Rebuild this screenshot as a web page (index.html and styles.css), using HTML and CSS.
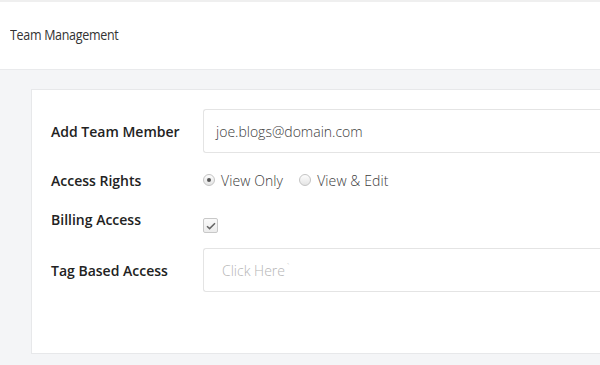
FILE: index.html
```html
<!DOCTYPE html>
<html>
<head>
<meta charset="utf-8">
<link rel="stylesheet" href="styles.css">
</head>
<body>
<header class="topbar">
  <h1 class="title">Team Management</h1>
</header>
<main class="content">
  <section class="card">
    <div class="row row-input">
      <label class="label">Add Team Member</label>
      <div class="field text-field">joe.blogs@domain.com</div>
    </div>
    <div class="row row-radio">
      <span class="label">Access Rights</span>
      <div class="options">
        <span class="option"><span class="radio checked"></span>View Only</span>
        <span class="option"><span class="radio"></span>View &amp; Edit</span>
      </div>
    </div>
    <div class="row row-check">
      <span class="label">Billing Access</span>
      <span class="checkbox">
        <svg width="10" height="8" viewBox="0 0 10 8"><path d="M1 4.2 L3.6 6.6 L9 1.2" fill="none" stroke="#666" stroke-width="1.5"/></svg>
      </span>
    </div>
    <div class="row row-input">
      <span class="label">Tag Based Access</span>
      <div class="field tag-field">Click Here<span class="tick">`</span></div>
    </div>
  </section>
</main>
</body>
</html>
```
FILE: styles.css
```css
* { box-sizing: border-box; }
html, body { margin: 0; padding: 0; }
body {
  background: #f4f5f7;
  font-family: "Open Sans", "Liberation Sans", sans-serif;
  width: 600px;
  height: 365px;
  overflow: hidden;
}
.topbar {
  background: #fff;
  border-top: 2px solid #efefef;
  border-bottom: 1px solid #e9eaec;
  height: 70px;
  padding-left: 10px;
  display: flex;
  align-items: center;
}
.title {
  margin: 0 0 1px 0;
  font-family: "Open Sans", sans-serif;
  font-weight: 400;
  font-size: 12.5px;
  color: #333;
  letter-spacing: -0.3px;
  transform: scaleY(1.1);
}
.content {
  padding: 19px 0 0 31px;
}
.card {
  background: #fff;
  border: 1px solid #e7e8ea;
  border-right: none;
  height: 265px;
  padding: 19px 0 0 19px;
}
.row {
  display: flex;
  align-items: center;
}
.label {
  width: 152px;
  flex: none;
  font-weight: 600;
  font-size: 14px;
  color: #222;
}
.row-input { height: 44px; }
.row-radio { height: 24px; margin-top: 15px; }
.row-check { height: 24px; margin-top: 16px; align-items: flex-start; }
.row-check .label { line-height: 24px; }
.row-input + .row-input, .row-check + .row-input { margin-top: 16px; }
.field {
  flex: 1;
  height: 44px;
  border: 1px solid #e4e4e4;
  border-right: none;
  border-radius: 3px 0 0 3px;
  display: flex;
  align-items: center;
  font-size: 14px;
  font-weight: 300;
}
.text-field { padding-left: 12px; color: #3c3c3c; }
.tag-field { padding-left: 18px; color: #b5b5b5; }
.tick { font-size: 9px; margin-left: 2px; align-self: center; margin-top: -8px; }
.options { display: flex; align-items: center; font-size: 14px; font-weight: 300; color: #3c3c3c; }
.option { display: flex; align-items: center; margin-right: 16px; letter-spacing: 0.1px; }
.radio {
  width: 12px;
  height: 12px;
  border-radius: 50%;
  border: 1px solid #c4c4c4;
  background: linear-gradient(#fdfdfd, #e4e4e4);
  margin-right: 6px;
  position: relative;
}
.radio.checked::after {
  content: "";
  position: absolute;
  left: 3px; top: 3px;
  width: 4px; height: 4px;
  border-radius: 50%;
  background: #555;
}
.checkbox {
  margin-top: 10px;
  width: 15px;
  height: 15px;
  border: 1px solid #c8c8c8;
  border-radius: 2px;
  background: linear-gradient(#fafafa, #ececec);
  display: flex;
  align-items: center;
  justify-content: center;
}
```
